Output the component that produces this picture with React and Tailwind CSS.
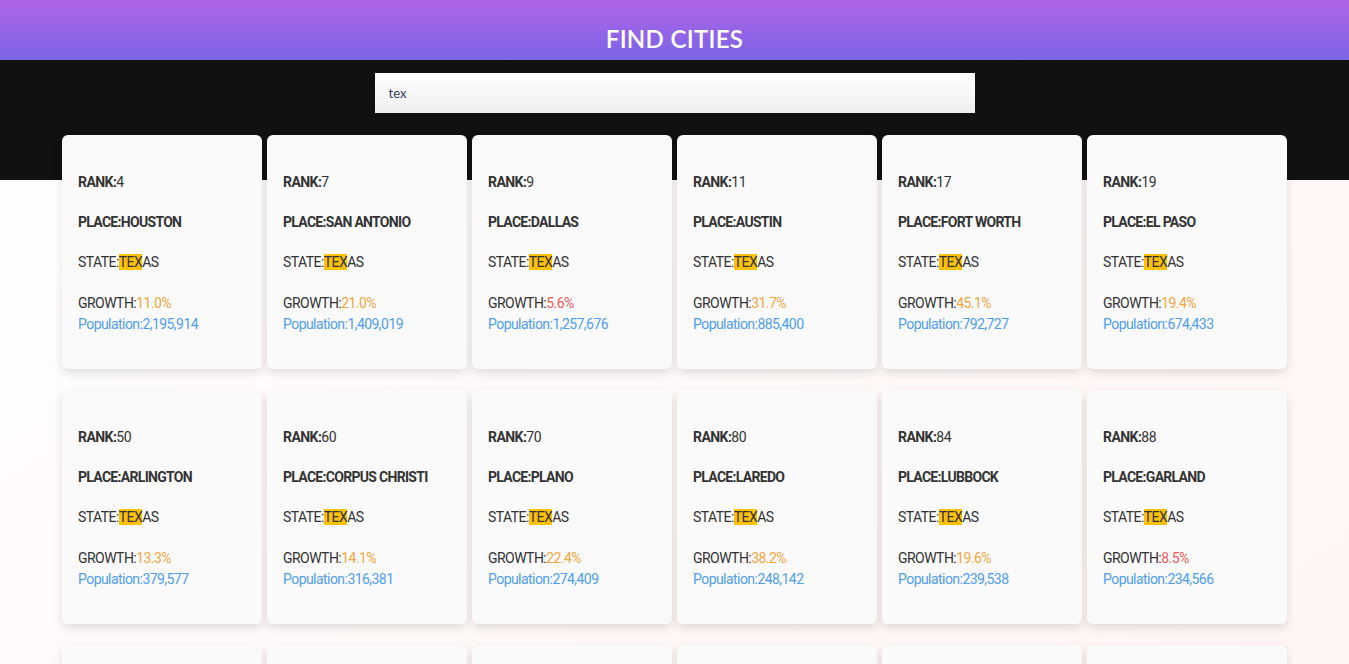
import { useState } from 'react'

const CITIES = [
  { rank: 4, place: 'HOUSTON', growth: '11.0', pop: '2,195,914' },
  { rank: 7, place: 'SAN ANTONIO', growth: '21.0', pop: '1,409,019' },
  { rank: 9, place: 'DALLAS', growth: '5.6', pop: '1,257,676' },
  { rank: 11, place: 'AUSTIN', growth: '31.7', pop: '885,400' },
  { rank: 17, place: 'FORT WORTH', growth: '45.1', pop: '792,727' },
  { rank: 19, place: 'EL PASO', growth: '19.4', pop: '674,433' },
  { rank: 50, place: 'ARLINGTON', growth: '13.3', pop: '379,577' },
  { rank: 60, place: 'CORPUS CHRISTI', growth: '14.1', pop: '316,381' },
  { rank: 70, place: 'PLANO', growth: '22.4', pop: '274,409' },
  { rank: 80, place: 'LAREDO', growth: '38.2', pop: '248,142' },
  { rank: 84, place: 'LUBBOCK', growth: '19.6', pop: '239,538' },
  { rank: 88, place: 'GARLAND', growth: '8.5', pop: '234,566' },
  { rank: 89, place: 'IRVING', growth: '19.1', pop: '228,653' },
  { rank: 98, place: 'AMARILLO', growth: '12.8', pop: '196,429' },
  { rank: 119, place: 'GRAND PRAIRIE', growth: '37.6', pop: '183,372' },
  { rank: 126, place: 'BROWNSVILLE', growth: '26.8', pop: '181,860' },
  { rank: 132, place: 'MCKINNEY', growth: '165.1', pop: '148,559' },
  { rank: 138, place: 'FRISCO', growth: '287.7', pop: '136,791' },
]

// resalta la coincidencia de la búsqueda dentro del texto
function Highlight({ text, query }) {
  const i = text.toLowerCase().indexOf(query.toLowerCase())
  if (!query || i < 0) return text
  return (
    <>
      {text.slice(0, i)}
      <span className="bg-[#ffc107]">{text.slice(i, i + query.length)}</span>
      {text.slice(i + query.length)}
    </>
  )
}

function CityCard({ city, query }) {
  const low = parseFloat(city.growth) < 10
  return (
    <div className="flex h-[234px] w-[200px] flex-col rounded-[6px] bg-[#fafafa] px-4 pt-[37px] text-[14px] leading-[20px] tracking-[-0.55px] text-[#333] shadow-[0_4px_10px_rgba(0,0,0,0.12)]">
      <p className="font-bold">RANK:<span className="font-normal">{city.rank}</span></p>
      <p className="mt-5 font-bold tracking-[-0.7px]">PLACE:{city.place}</p>
      <p className="mt-5">STATE:<Highlight text="TEXAS" query={query} /></p>
      <p className="mt-[21px]">
        GROWTH:<span className={low ? 'text-[#ef5b5b]' : 'text-[#f5a53d]'}>{city.growth}%</span>
      </p>
      <p className="mt-px text-[#4f9ef0]">Population:{city.pop}</p>
    </div>
  )
}

export default function App() {
  const [query, setQuery] = useState('tex')

  return (
    <div className="min-h-screen bg-gradient-to-br from-white to-[#fff3f2] font-['Roboto',sans-serif]">
      <header className="flex h-[60px] justify-center bg-gradient-to-b from-[#b064e8] to-[#7a63e6] pt-[24px]">
        <h1 className="font-['Lato',sans-serif] text-[24px] leading-[30px] font-semibold tracking-[0.3px] text-white">
          FIND CITIES
        </h1>
      </header>

      <div className="flex h-[120px] justify-center bg-[#111] pt-[13px]">
        <input
          value={query}
          onChange={e => setQuery(e.target.value)}
          className="h-[40px] w-[600px] bg-gradient-to-b from-white to-[#efefef] px-[14px] font-['Lato',sans-serif] text-[13px] text-[#2f3e5c] outline-none"
        />
      </div>

      <div className="-mt-[45px] flex justify-center">
        <div className="grid grid-cols-[repeat(6,200px)] gap-x-[5px] gap-y-[21px]">
          {CITIES.map(c => (
            <CityCard key={c.rank} city={c} query={query} />
          ))}
        </div>
      </div>
    </div>
  )
}
